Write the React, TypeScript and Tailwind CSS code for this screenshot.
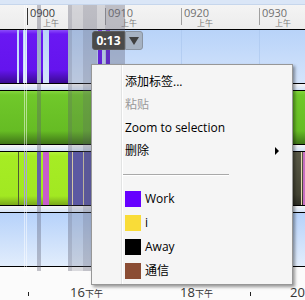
import React from 'react';

type Seg = { x: number; w: number; cls: string };

// vertical selection / tag stripes that run over every row
const stripes: Seg[] = [
  { x: 24, w: 1, cls: 'bg-white/50' },
  { x: 26, w: 1, cls: 'bg-white/50' },
  { x: 37, w: 4, cls: 'bg-[#5a5a6e]/35' },
  { x: 68, w: 4, cls: 'bg-[#5a5a6e]/35' },
  { x: 72, w: 11, cls: 'bg-[#5a5a6e]/20' },
  { x: 83, w: 14, cls: 'bg-[#5a5a6e]/35' },
  { x: 97, w: 8, cls: 'bg-[#5a5a6e]/20' },
  { x: 105, w: 20, cls: 'bg-[#5a5a6e]/35' },
];

const purple = 'bg-[linear-gradient(to_bottom,#8c4cfa_0px,#6a18f2_4px,#6414ee_40px,#3a0a92_53px)]';
const lime = 'bg-[linear-gradient(to_bottom,#b4f23c_0px,#a6ec24_4px,#a2e822_44px,#7aa81c_53px)]';

const row1: Seg[] = [
  { x: 0, w: 17, cls: purple },
  { x: 19, w: 4, cls: purple },
  { x: 27, w: 10, cls: purple },
  { x: 41, w: 2, cls: purple },
  { x: 49, w: 19, cls: purple },
  { x: 98, w: 4, cls: purple },
  { x: 106, w: 4, cls: purple },
];

const row3: Seg[] = [
  { x: 0, w: 68, cls: lime },
  { x: 18, w: 1, cls: 'bg-[#4e5a34]' },
  { x: 24, w: 1, cls: 'bg-[#4a4ab4]' },
  { x: 26, w: 1, cls: 'bg-[#4a4ab4]' },
  { x: 37, w: 4, cls: 'bg-[#6a68c6]' },
  { x: 43, w: 6, cls: 'bg-[#c85ccc]' },
  { x: 68, w: 140, cls: 'bg-[#5c58b0]' },
  { x: 72, w: 1, cls: 'bg-[#f0e2b4]' },
  { x: 83, w: 1, cls: 'bg-[#f0e2b4]' },
  { x: 280, w: 25, cls: 'bg-[linear-gradient(to_bottom,#5a5a48,#444434_80%,#2e2e24)]' },
  { x: 301, w: 1, cls: 'bg-[#e8dcb0]' },
  { x: 303, w: 2, cls: 'bg-[#c86cc0]' },
];

const grid = [181, 259];

function Segs({ segs }: { segs: Seg[] }) {
  return (
    <>
      {segs.map((s, i) => (
        <div key={i} className={`absolute top-0 bottom-0 ${s.cls}`} style={{ left: s.x, width: s.w }} />
      ))}
    </>
  );
}

function Grid() {
  return (
    <>
      {grid.map((x) => (
        <div key={x} className="absolute top-0 bottom-0 w-px bg-[#a8c4ec]/60" style={{ left: x }} />
      ))}
    </>
  );
}

function Gap() {
  return <div className="h-[6px] bg-[linear-gradient(to_bottom,#f6f6f6,#d4e3f8)]" />;
}

const ticks = [
  { x: 27, label: '0900', dark: true },
  { x: 105, label: '0910', dark: false },
  { x: 181, label: '0920', dark: false },
  { x: 259, label: '0930', dark: false },
];

function Ruler() {
  return (
    <div className="relative h-[25px] bg-[linear-gradient(to_bottom,#f4f4f4,#ececec)] border-b border-black">
      {ticks.map((t) => (
        <div key={t.x} className="absolute top-0 h-full" style={{ left: t.x }}>
          <div className={`absolute left-0 top-[3px] w-px h-[17px] ${t.dark ? 'bg-[#333]' : 'bg-[#a0a0a0]'}`} />
          <div className={`absolute left-[3px] top-[3px] text-[11px] leading-[10px] ${t.dark ? 'text-[#3a3a3a]' : 'text-[#707070]'}`}>
            {t.label}
          </div>
          <div className="absolute left-[16px] top-[13px] text-[8px] leading-[9px] text-[#7a7a7a] whitespace-nowrap">上午</div>
        </div>
      ))}
    </div>
  );
}

function Swatch({ cls }: { cls: string }) {
  return <span className={`w-[16px] h-[16px] mr-[4px] shrink-0 ${cls}`} />;
}

function ContextMenu() {
  return (
    <div className="absolute left-[91px] top-[64px] w-[202px] h-[221px] bg-[#f5f5f5] border border-[#979797] shadow-[2px_2px_3px_rgba(0,0,0,0.4)] text-[12px] text-black">
      <div className="absolute left-[29px] top-0 bottom-0 w-px bg-[#e2e3e3]" />
      <div className="absolute left-[30px] top-0 bottom-0 w-px bg-white" />
      <div className="relative flex flex-col pt-[5px]">
        <div className="h-[23px] flex items-center pl-[33px]">添加标签...</div>
        <div className="h-[23px] flex items-center pl-[33px] text-[#9a9a9a]">粘贴</div>
        <div className="h-[23px] flex items-center pl-[33px]">Zoom to selection</div>
        <div className="h-[23px] flex items-center pl-[33px] pr-[13px] justify-between">
          <span>删除</span>
          <span className="w-0 h-0 border-y-[4px] border-y-transparent border-l-[4px] border-l-black" />
        </div>
        <div className="h-[25px] pt-[12px] pl-[31px]">
          <div className="w-[106px] h-px bg-[#a9a9a9]" />
          <div className="w-[106px] h-px bg-white" />
        </div>
        <div className="h-[24px] flex items-center pl-[33px]">
          <Swatch cls="bg-[#6600ff]" />
          Work
        </div>
        <div className="h-[24px] flex items-center pl-[33px]">
          <Swatch cls="bg-[#f9dc38]" />
          i
        </div>
        <div className="h-[24px] flex items-center pl-[33px]">
          <Swatch cls="bg-black" />
          Away
        </div>
        <div className="h-[24px] flex items-center pl-[33px]">
          <Swatch cls="bg-[#8b4d34]" />
          通信
        </div>
      </div>
    </div>
  );
}

export default function App() {
  return (
    <div className="relative w-[305px] h-[300px] overflow-hidden bg-[#fbfbfb] font-['Open_Sans','Noto_Sans_CJK_SC',sans-serif]">
      <div className="h-[5px] bg-[#dae6f7] border-b border-[#c6d6ec]" />
      <Ruler />

      {/* track rows */}
      <div className="relative h-[54px] border-b border-black bg-[linear-gradient(to_bottom,#b8d3f9,#d4e4fb)] overflow-hidden">
        <Grid />
        <Segs segs={row1} />
      </div>
      <Gap />
      <div className="relative h-[55px] border-y border-black bg-[linear-gradient(to_bottom,#84d63c_0px,#70c82a_4px,#66bc24_40px,#3f7418_53px)] overflow-hidden" />
      <Gap />
      <div className="relative h-[55px] border-y border-black bg-[linear-gradient(to_bottom,#b8d3f9,#dfebfc)] overflow-hidden">
        <Segs segs={row3} />
      </div>
      <Gap />
      <div className="relative h-[55px] border-y border-black bg-[linear-gradient(to_bottom,#b6d2fa,#e2edfc)] overflow-hidden">
        <Grid />
      </div>

      {/* selection stripes over everything */}
      <div className="absolute left-0 top-[5px] w-full h-[266px] pointer-events-none">
        <Segs segs={stripes} />
      </div>

      {/* bottom axis */}
      <div className="absolute left-[28px] top-[292px] w-px h-[4px] bg-[#222]" />
      <div className="absolute left-[250px] top-[292px] w-px h-[4px] bg-[#222]" />
      <div className="absolute left-[70px] top-[283px] flex items-baseline text-[#333]">
        <span className="text-[13px]">16</span>
        <span className="text-[9px]">下午</span>
      </div>
      <div className="absolute left-[180px] top-[283px] flex items-baseline text-[#333]">
        <span className="text-[13px]">18</span>
        <span className="text-[9px]">下午</span>
      </div>
      <div className="absolute left-[290px] top-[283px] flex items-baseline text-[#333]">
        <span className="text-[13px]">20</span>
      </div>

      {/* duration tooltip */}
      <div className="absolute left-[92px] top-[31px] flex h-[19px]">
        <div className="w-[33px] rounded-l-[3px] bg-[#4a4a4a] border border-[#5a5a5a] text-white font-bold text-[12px] flex items-center justify-center">
          0:13
        </div>
        <div className="w-[18px] rounded-r-[3px] bg-[#a6b2c2] border border-[#8a94a2] flex items-center justify-center">
          <span className="w-0 h-0 border-x-[5px] border-x-transparent border-t-[8px] border-t-[#404040]" />
        </div>
      </div>

      <ContextMenu />
    </div>
  );
}
